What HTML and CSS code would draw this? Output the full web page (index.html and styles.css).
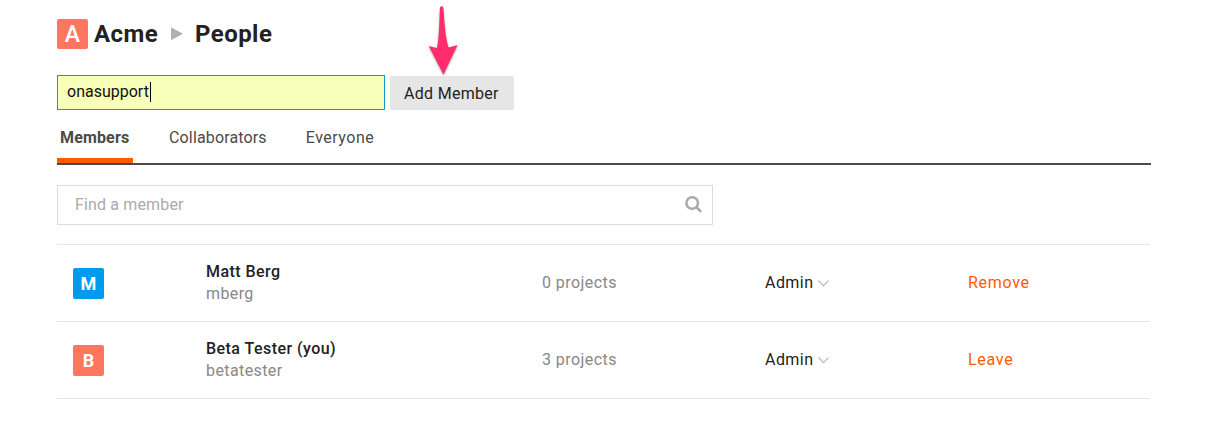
FILE: index.html
```html
<!DOCTYPE html>
<html lang="en">
<head>
<meta charset="utf-8">
<title>Acme People</title>
<link rel="stylesheet" href="styles.css">
</head>
<body>
<main class="page">
  <h1 class="crumbs">
    <span class="avatar avatar-org">A</span>
    <span class="org">Acme</span>
    <svg class="sep" width="12" height="14" viewBox="0 0 12 14"><path d="M0 0.3 12 6.8 0 13.3Z" fill="#b0b0b0"/></svg>
    <span class="section">People</span>
  </h1>
  <form class="add">
    <div class="username"><span class="typed">onasupport</span><span class="caret"></span></div>
    <button class="add-btn" type="button"><span class="btn-label">Add Member</span></button>
    <svg class="arrow" width="36" height="76" viewBox="0 0 36 76"><path d="M16 7.5Q17.8 5.2 19.3 7.5C20.6 24 21.5 38 24.6 47.6L33.6 45 19.5 74.8 4.7 46 13 48C15.2 38 15.3 22 16 7.5Z" fill="#ff2d6c"/></svg>
  </form>
  <nav class="tabs">
    <a class="tab active"><span class="t-members">Members</span></a>
    <a class="tab"><span class="t-collab">Collaborators</span></a>
    <a class="tab"><span class="t-every">Everyone</span></a>
  </nav>
  <div class="search">
    <span class="placeholder">Find a member</span>
    <svg width="18" height="18" viewBox="0 0 18 18" fill="none" stroke="#aaa"><circle cx="7.2" cy="7" r="5.8" stroke-width="2.5"/><path d="m11.6 11.4 3.8 3.8" stroke-width="2.6" stroke-linecap="round"/></svg>
  </div>
  <section class="list">
    <div class="row">
      <span class="avatar avatar-blue">M</span>
      <div class="who"><span class="name">Matt Berg</span><span class="user">mberg</span></div>
      <span class="projects">0 projects</span>
      <span class="role"><span class="role-label">Admin</span><svg width="11" height="7" viewBox="0 0 11 7"><path d="M.5.7 5.5 5.7 10.5.7" fill="none" stroke="#b5b5b5" stroke-width="1.2"/></svg></span>
      <a class="action">Remove</a>
    </div>
    <div class="row">
      <span class="avatar avatar-coral">B</span>
      <div class="who"><span class="name">Beta Tester (you)</span><span class="user">betatester</span></div>
      <span class="projects">3 projects</span>
      <span class="role"><span class="role-label">Admin</span><svg width="11" height="7" viewBox="0 0 11 7"><path d="M.5.7 5.5 5.7 10.5.7" fill="none" stroke="#b5b5b5" stroke-width="1.2"/></svg></span>
      <a class="action">Leave</a>
    </div>
  </section>
</main>
</body>
</html>
```
FILE: styles.css
```css
* { box-sizing: border-box; }
body { margin: 0; background: #fff; color: #222; font: 16px/22px Roboto, "Liberation Sans", sans-serif; }
.page { width: 1094px; margin-left: 57px; padding-top: 19px; }
.crumbs { display: flex; align-items: center; height: 30px; margin: 0; font-size: 24px; line-height: 30px; font-weight: 700; letter-spacing: .45px; }
.avatar { display: flex; align-items: center; justify-content: center; width: 31px; height: 31px; border-radius: 2px; color: #fff; font-size: 18px; font-weight: 700; padding-top: 2px; }
.avatar-org { height: 30px; background: #ff7660; font-size: 23px; font-weight: 500; padding-top: 1px; letter-spacing: 0; }
.avatar-blue { background: #009bee; }
.avatar-coral { background: #ff7660; }
.org { width: 77px; margin-left: 6px; }
.section { margin-left: 12px; }
.add { position: relative; display: flex; align-items: flex-end; gap: 5px; height: 35px; margin: 26px 0 0; }
.username { display: flex; align-items: center; width: 328px; height: 35px; border: 1px solid #0c99dc; background: #f8ffb9; color: #111; padding: 0 9px 1px; }
.caret { width: 1px; height: 20px; background: #000; margin-left: 1px; }
.add-btn { width: 124px; height: 34px; border: 0; border-radius: 2px; background: #e6e6e6; color: #222; font: inherit; letter-spacing: .3px; padding: 2px 0 0 14px; text-align: left; }
.arrow { position: absolute; left: 367px; top: -75px; filter: drop-shadow(0 1px 1px rgba(0, 0, 0, .35)); }
.tabs { display: flex; height: 55px; border-bottom: 2px solid #4a4a4a; color: #4a4a4a; }
.tab { padding: 17px 3px 0; margin-right: 33px; white-space: nowrap; }
.active { width: 76px; border-bottom: 5px solid #ff5c00; font-weight: 700; letter-spacing: .15px; }
.t-collab { letter-spacing: .15px; }
.t-every { letter-spacing: .5px; }
.search { display: flex; justify-content: space-between; align-items: center; width: 656px; height: 40px; margin-top: 20px; padding: 0 9px 1px 17px; border: 1px solid #ddd; color: #aaa; letter-spacing: .15px; }
.list { width: 1093px; margin-top: 19px; border-top: 1px solid #e6e6e6; }
.row { display: grid; grid-template-columns: 133px 336px 223px 203px auto; align-items: center; height: 77px; padding-left: 16px; border-bottom: 1px solid #e6e6e6; letter-spacing: .45px; }
.row .avatar { letter-spacing: 0; }
.who { display: flex; flex-direction: column; align-items: flex-start; }
.name { font-weight: 500; }
.user, .projects { color: #888; }
.user { letter-spacing: .4px; }
.role { display: flex; align-items: center; gap: 5px; color: #222; }
.action { color: #ff5c00; letter-spacing: .7px; }
```
